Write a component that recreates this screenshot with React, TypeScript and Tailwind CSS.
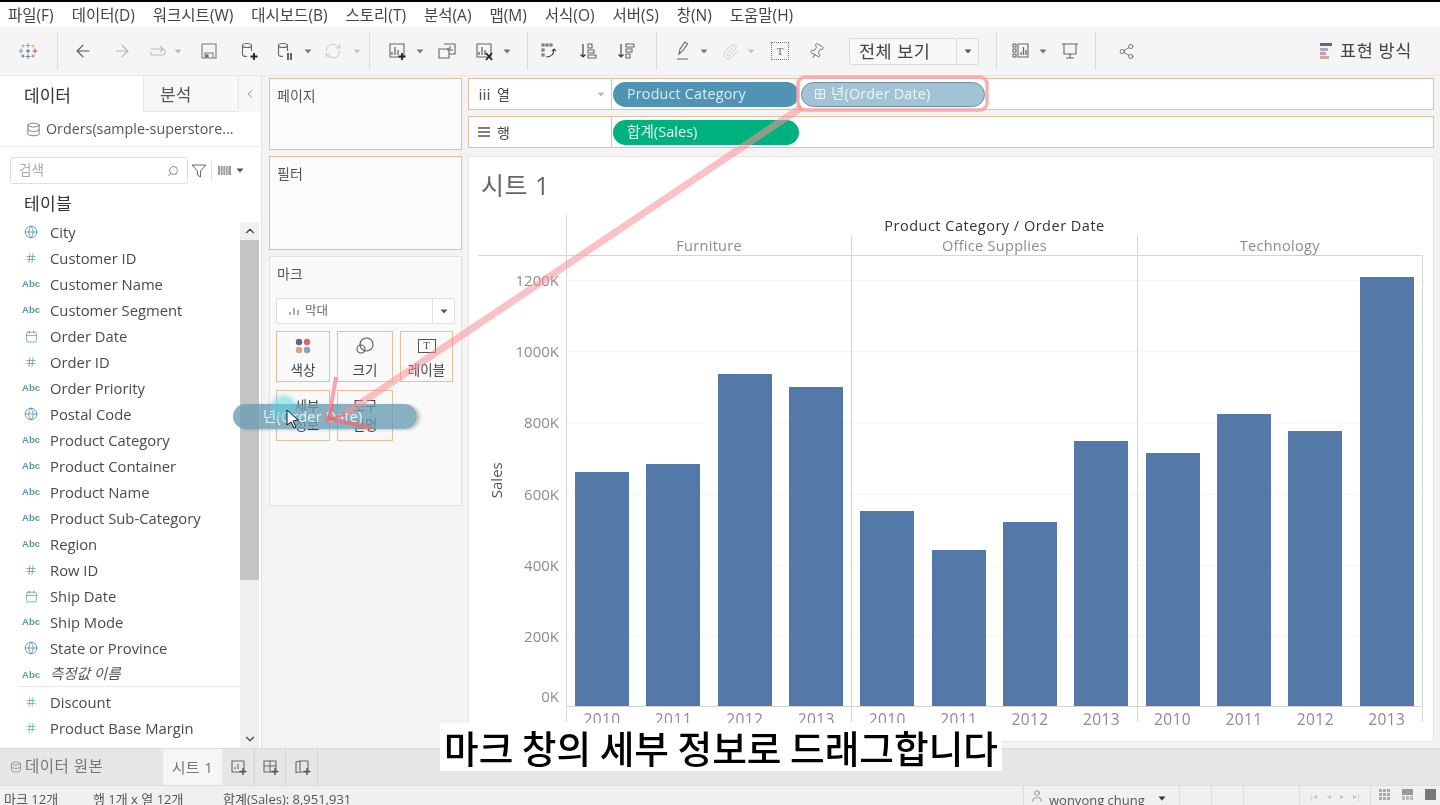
import React from "react";
import { ArrowLeft, ArrowRight, Globe, Hash, Calendar, ChevronUp, ChevronDown, ChevronLeft, Search, Pin, Paperclip, Share2, User, Database, RefreshCw } from "lucide-react";

const Caret = ({ className = "" }: { className?: string }) => (
  <svg width="8" height="5" viewBox="0 0 8 5" className={className}><path d="M0.5 0.5h7L4 4.5z" fill="currentColor" /></svg>
);

const Sep = ({ className = "" }: { className?: string }) => <div className={`w-px h-[38px] bg-[#dcdcdc] ${className}`} />;

const TableauLogo = () => (
  <svg width="20" height="20" viewBox="0 0 20 20" opacity="0.75">
    <g strokeWidth="1.1" fill="none">
      <path d="M10 2v5M7.500 4.500h5" stroke="#e8762c" />
      <path d="M10 13v5M7.500 15.500h5" stroke="#5b6591" />
      <path d="M3 7.500v5M0.500 10h5" stroke="#59879b" />
      <path d="M17 7.500v5M14.500 10h5" stroke="#c72035" />
      <path d="M5 3.500v3M3.500 5h3" stroke="#7099a6" />
      <path d="M15 3.500v3M13.500 5h3" stroke="#eb912b" />
      <path d="M5 13.500v3M3.500 15h3" stroke="#1f447d" />
      <path d="M15 13.500v3M13.500 15h3" stroke="#5c6692" />
      <path d="M10 8v4M8 10h4" stroke="#1f447d" />
    </g>
  </svg>
);

const SvgI = ({ children, w = 22 }: { children: React.ReactNode; w?: number }) => (
  <svg width={w} height="20" viewBox={`0 0 ${w} 20`} fill="none" stroke="#666" strokeWidth="1.1">{children}</svg>
);

const Bars = () => <path d="M5 14v-3M8 14V6M11 14V9" strokeWidth="1.3" />;
const Plus = () => <path d="M15 12v7M11.500 15.500h7" stroke="#222" strokeWidth="1.8" />;

const Toolbar = () => (
  <div className="h-[48px] bg-[#f5f5f5] flex items-center text-[#666] shrink-0">
    <div className="ml-[18px]"><TableauLogo /></div>
    <Sep className="ml-[19px]" />
    <ArrowLeft size={20} strokeWidth={1.4} className="ml-[15px] text-[#555]" />
    <ArrowRight size={20} strokeWidth={1.4} className="ml-[19px] text-[#b5b5b5]" />
    <div className="ml-[16px]"><SvgI><path d="M3 8h11a3 3 0 0 1 0 6H4a2 2 0 0 1-1-3M12 5l3 3-3 3" stroke="#bbb" /></SvgI></div>
    <Caret className="ml-[4px] text-[#bbb]" />
    <div className="ml-[17px]"><SvgI w={20}><path d="M3 3h14v14H3zM6 17v-5h8v5" stroke="#777" /><path d="M7 14h2v2H7z" fill="#777" /></SvgI></div>
    <div className="ml-[20px]"><SvgI><ellipse cx="8" cy="4.500" rx="4.500" ry="2" /><path d="M3.500 4.500v9a4.500 2 0 0 0 4.500 2M12.500 4.500V10" /><Plus /></SvgI></div>
    <div className="ml-[14px]"><SvgI><ellipse cx="8" cy="4.500" rx="4.500" ry="2" /><path d="M3.500 4.500v9a4.500 2 0 0 0 4.500 2M12.500 4.500V10" /><path d="M13 12v7M16 12v7" stroke="#333" strokeWidth="1.5" /></SvgI></div>
    <Caret className="ml-[7px] text-[#777]" />
    <RefreshCw size={18} strokeWidth={1.2} className="ml-[12px] text-[#c4c4c4]" />
    <Caret className="ml-[11px] text-[#c4c4c4]" />
    <Sep className="ml-[8px]" />
    <div className="ml-[17px]"><SvgI><path d="M3 3h14v13H3z" /><Bars /><Plus /></SvgI></div>
    <Caret className="ml-[7px] text-[#777]" />
    <div className="ml-[13px]"><SvgI><path d="M2 8h10v9H2zM7 3h11v10h-6" /><path d="M11 10V7M13 10V5M15 10V8" /></SvgI></div>
    <div className="ml-[15px]"><SvgI><path d="M3 3h14v13H3z" /><Bars /><path d="M12 12l6 7M18 12l-6 7" stroke="#222" strokeWidth="1.8" /></SvgI></div>
    <Caret className="ml-[7px] text-[#777]" />
    <Sep className="ml-[16px]" />
    <div className="ml-[10px]"><SvgI><path d="M4 3h2v2H4zM8 3h2v2H8zM12 3h2v2h-2zM4 8h2v2H4zM4 13h2v2H4z" /><path d="M8 16c5 0 8-3 8-8M14 10l2-2 2 2" stroke="#444" /></SvgI></div>
    <div className="ml-[17px]"><SvgI><path d="M6 3v13M3.500 13.500L6 16l2.500-2.500" stroke="#333" /><path d="M11 3h4v4h-4zM11 9h6v3h-6zM11 14h8v3h-8z" /></SvgI></div>
    <div className="ml-[16px]"><SvgI><path d="M6 3v13M3.500 13.500L6 16l2.500-2.500" stroke="#333" /><path d="M11 3h8v3h-8zM11 8h6v3h-6zM11 13h4v4h-4z" /></SvgI></div>
    <Sep className="ml-[19px]" />
    <div className="ml-[17px]"><SvgI w={17}><path d="M5 13l1-5 5-7 2.500 2-5 7zM3 18h11" stroke="#666" /></SvgI></div>
    <Caret className="ml-[9px] text-[#777]" />
    <Paperclip size={17} strokeWidth={1.2} className="ml-[14px] text-[#c8c8c8]" />
    <Caret className="ml-[8px] text-[#c4c4c4]" />
    <div className="ml-[16px] w-[18px] h-[18px] border border-dotted border-[#777] flex items-center justify-center text-[11px] leading-none [font-family:'Liberation_Serif',serif]">T</div>
    <Pin size={17} strokeWidth={1.2} className="ml-[19px] rotate-[30deg] text-[#666]" />
    <div className="ml-[24px] w-[130px] h-[27px] border border-[#dcdcdc] bg-[#f7f7f7] rounded-[2px] flex items-center">
      <span className="flex-1 pl-[9px] pt-[2px] text-[17.500px] tracking-[0.5px] text-[#444] leading-none">전체 보기</span>
      <span className="w-[22px] h-full border-l border-[#dcdcdc] flex items-center justify-center"><Caret className="text-[#555]" /></span>
    </div>
    <Sep className="ml-[17px]" />
    <div className="ml-[13px]"><SvgI><path d="M3 3h3v3H3zM3 8h3v3H3zM3 13h3v3H3zM8 3h10v13H8z" /><path d="M11 14v-3M13.500 14V6M16 14V9" strokeWidth="1.3" /></SvgI></div>
    <Caret className="ml-[7px] text-[#777]" />
    <div className="ml-[13px]"><SvgI w={20}><path d="M2 3h16M4 3v10h12V3M10 13v4M6 17h8" /></SvgI></div>
    <Sep className="ml-[15px]" />
    <Share2 size={17} strokeWidth={1.2} className="ml-[22px] text-[#666]" />
    <div className="ml-auto mr-[28px] flex items-center gap-[7px]">
      <svg width="13" height="18" viewBox="0 0 13 18">
        <rect x="0" y="1" width="12" height="3" fill="#5b6591" />
        <rect x="0" y="6" width="8" height="3" fill="#a5adc8" />
        <rect x="0" y="10" width="6" height="3" fill="#e8909a" />
        <rect x="0" y="14" width="9" height="3" fill="#c9a9a9" />
      </svg>
      <span className="text-[17.500px] tracking-[0.6px] text-[#444] leading-none">표현 방식</span>
    </div>
  </div>
);

const Abc = () => <span className="text-[9.500px] font-semibold text-[#5b9a9f] leading-none [font-family:'Liberation_Sans',sans-serif]">Abc</span>;

type Kind = "g" | "h" | "a" | "d";
const fields: [Kind, string][] = [
  ["g", "City"], ["h", "Customer ID"], ["a", "Customer Name"], ["a", "Customer Segment"], ["d", "Order Date"], ["h", "Order ID"],
  ["a", "Order Priority"], ["g", "Postal Code"], ["a", "Product Category"], ["a", "Product Container"], ["a", "Product Name"],
  ["a", "Product Sub-Category"], ["a", "Region"], ["h", "Row ID"], ["d", "Ship Date"], ["a", "Ship Mode"], ["g", "State or Province"],
];

const FieldIcon = ({ k, green }: { k: Kind; green?: boolean }) => (
  <span className="w-[30px] ml-[16px] flex justify-center items-center shrink-0">
    {k === "g" && <Globe size={14} strokeWidth={1.4} className="text-[#4f93a8]" />}
    {k === "h" && <Hash size={12} strokeWidth={1.5} className={green ? "text-[#52b69a]" : "text-[#5b9a9f]"} />}
    {k === "a" && <Abc />}
    {k === "d" && <Calendar size={13} strokeWidth={1.3} className="text-[#4f93a8]" />}
  </span>
);

const Field = ({ k, name, green }: { k: Kind; name: string; green?: boolean }) => (
  <div className="h-[26px] flex items-center">
    <FieldIcon k={k} green={green} />
    <span className="ml-[4px] text-[14.800px] text-[#4a4a4a] whitespace-nowrap leading-none">{name}</span>
  </div>
);

const DataPanel = () => (
  <div className="w-[262px] bg-white flex flex-col shrink-0 border-r border-[#e2e2e2]">
    <div className="h-[36px] flex shrink-0 bg-[#f7f7f7]">
      <div className="w-[143px] bg-white pl-[24px] pt-[3px] flex items-center text-[17px] text-[#333]">데이터</div>
      <div className="flex-1 flex items-center border border-t-0 border-[#e6e6e6] pl-[16px] pt-[3px] text-[17px] text-[#555]">분석</div>
      <div className="w-[22px] flex items-center justify-center"><ChevronLeft size={14} strokeWidth={1.3} className="text-[#666]" /></div>
    </div>
    <div className="h-[35px] flex items-center pl-[26px] gap-[5px] border-b border-[#ececec] shrink-0">
      <Database size={15} strokeWidth={1.3} className="text-[#666]" />
      <span className="text-[14.300px] text-[#555] whitespace-nowrap">Orders(sample-superstore...</span>
    </div>
    <div className="h-[27px] mt-[10px] flex items-center shrink-0 pl-[10px]">
      <div className="w-[178px] h-[27px] border border-[#dedede] rounded-[3px] flex items-center justify-between px-[8px]">
        <span className="text-[13.500px] text-[#aaa]">검색</span>
        <Search size={12} strokeWidth={1.5} className="text-[#666] -scale-x-100" />
      </div>
      <svg width="16" height="14" viewBox="0 0 16 14" className="ml-[3px]" fill="none" stroke="#666"><path d="M1 1h14L9.500 7v6L6.500 11V7z" /></svg>
      <div className="w-px h-[20px] bg-[#e0e0e0] ml-[4px]" />
      <svg width="13" height="9" viewBox="0 0 13 9" className="ml-[6px]"><path d="M0 0h13v9H0z" fill="#999" /><path d="M2.500 0v9M5 0v9M7.500 0v9M10 0v9" stroke="#fff" strokeWidth="0.8" /></svg>
      <Caret className="ml-[5px] text-[#555]" />
    </div>
    <div className="flex-1 flex mt-[11px] min-h-0">
      <div className="flex-1 min-w-0">
        <div className="h-[18px] mb-[6px] pl-[24px] flex items-center text-[17px] text-[#333] tracking-[0.3px]">테이블</div>
        {fields.map(([k, n]) => <Field key={n} k={k} name={n} />)}
        <div className="h-[26px] pt-[2px] flex items-center border-b border-[#e8e8e8] ml-[18px] mb-[2px]">
          <span className="w-[30px] -ml-[2px] flex justify-center"><Abc /></span>
          <span className="ml-[4px] text-[14.500px] italic text-[#555] leading-none">측정값 이름</span>
        </div>
        <Field k="h" name="Discount" green />
        <Field k="h" name="Product Base Margin" green />
      </div>
      <div className="w-[19px] mr-[2px] mt-[27px] bg-[#f0f0f0] flex flex-col shrink-0">
        <div className="h-[18px] flex items-center justify-center shrink-0"><ChevronUp size={14} className="text-[#444]" /></div>
        <div className="h-[340px] bg-[#c4c4c4] shrink-0" />
        <div className="flex-1" />
        <div className="h-[18px] flex items-center justify-center shrink-0"><ChevronDown size={14} className="text-[#444]" /></div>
      </div>
    </div>
  </div>
);

const MarkBtn = ({ label, icon, className = "" }: { label: string; icon?: React.ReactNode; className?: string }) => (
  <div className={`h-[51px] border border-[#e6bf9e] flex flex-col items-center justify-end pb-[2px] ${className}`}>
    {icon}
    {label && <span className="text-[13.500px] text-[#444] leading-[18px]">{label}</span>}
  </div>
);

const MiddleCol = () => (
  <div className="w-[193px] ml-[7px] pt-[2px] shrink-0 flex flex-col">
    <div className="h-[72px] border border-[#e6bf9e] bg-[#fbfbfb] pl-[7px] pt-[6px] text-[14px] text-[#555]">페이지</div>
    <div className="h-[94px] mt-[6px] border border-[#e6bf9e] bg-[#fbfbfb] pl-[7px] pt-[6px] text-[14px] text-[#555]">필터</div>
    <div className="h-[250px] mt-[6px] border border-[#e2e2e2] bg-[#f9f9f9] px-[6px]">
      <div className="pl-[1px] pt-[6px] h-[41px] text-[14px] text-[#555]">마크</div>
      <div className="h-[26px] border border-[#dedede] bg-white rounded-[2px] flex items-center">
        <span className="flex-1 flex items-center pl-[12px] gap-[6px] text-[12.500px] text-[#666]">
          <svg width="10" height="8" viewBox="0 0 10 8"><path d="M1 8V5M5 8V1M9 8V3" stroke="#999" strokeWidth="1.6" /></svg>막대
        </span>
        <span className="w-[22px] h-full border-l border-[#e2e2e2] flex items-center justify-center"><Caret className="text-[#555]" /></span>
      </div>
      <div className="mt-[7px] grid grid-cols-[54px_56px_53px] gap-x-[7px] gap-y-[8px] -mr-[1px]">
        <MarkBtn label="색상" icon={
          <svg width="16" height="16" viewBox="0 0 16 16" className="mb-[7px]"><circle cx="4" cy="4" r="3.200" fill="#5b6591" /><circle cx="12" cy="4" r="3.200" fill="#d9647a" /><circle cx="4" cy="12" r="3.200" fill="#e0a577" /><circle cx="12" cy="12" r="3.200" fill="#7ea6c4" /></svg>
        } />
        <MarkBtn label="크기" icon={
          <svg width="20" height="18" viewBox="0 0 20 18" fill="none" stroke="#555" strokeWidth="1.1" className="mb-[6px]"><circle cx="11.500" cy="7.500" r="6.500" /><circle cx="6" cy="12" r="4" /></svg>
        } />
        <MarkBtn label="레이블" icon={
          <div className="w-[18px] h-[14px] border border-[#555] flex items-center justify-center text-[10px] leading-none mb-[8px] [font-family:'Liberation_Serif',serif] text-[#444]">T</div>
        } />
        <MarkBtn label="" className="!justify-center !pb-0 text-center" icon={<span className="text-[13.500px] leading-[19px] text-[#444] text-center pl-[8px]">세부<br />정보</span>} />
        <MarkBtn label="" className="!justify-center !pb-0 text-center" icon={<span className="text-[13.500px] leading-[19px] text-[#444] text-center">도구<br />설명</span>} />
      </div>
    </div>
  </div>
);

const Shelf = ({ icon, label, caret, children, className = "" }: { icon: React.ReactNode; label: string; caret?: boolean; children: React.ReactNode; className?: string }) => (
  <div className={`h-[32px] border border-[#e6bf9e] bg-white flex ${className}`}>
    <div className="w-[143px] border-r border-[#e6bf9e] flex items-center pl-[8px] gap-[6px] text-[14px] text-[#444] shrink-0">
      <span className="w-[14px] flex justify-center">{icon}</span>{label}
      {caret && <Caret className="ml-auto mr-[6px] text-[#bbb]" />}
    </div>
    <div className="flex items-center pl-[1px] gap-[2px]">{children}</div>
  </div>
);

const pane = [
  { name: "Furniture", tops: [472, 464, 374, 387] },
  { name: "Office Supplies", tops: [511, 550, 522, 441] },
  { name: "Technology", tops: [453, 414, 431, 277] },
];
const ticks: [string, string][] = [["1200K", "mb-[51.200px]"], ["1000K", "mb-[51.200px]"], ["800K", "mb-[51.200px]"], ["600K", "mb-[51.200px]"], ["400K", "mb-[51.200px]"], ["200K", "mb-[40px]"], ["0K", ""]];
const years = ["2010", "2011", "2012", "2013"];

const Chart = () => (
  <div className="ml-[9px] w-[945px] flex flex-col">
    <div className="h-[21px] ml-[88px] border-l border-[#d4d4d4] flex items-end justify-center pr-[1px] text-[14.500px] font-medium text-[#333] leading-[20px] tracking-[0.5px]">Product Category / Order Date</div>
    <div className="h-[20px] pl-[88px] border-b border-[#d4d4d4] flex">
      {pane.map((p) => (
        <div key={p.name} className="w-[285.300px] border-l border-[#d4d4d4] flex items-center justify-center text-[14.500px] text-[#8c8c8c] tracking-[0.3px]">{p.name}</div>
      ))}
    </div>
    <div className="h-[451px] flex">
      <div className="w-[88px] flex shrink-0">
        <div className="w-[38px] flex items-center justify-center">
          <span className="-rotate-90 text-[15px] text-[#555] translate-y-[-1px] translate-x-[-1px]">Sales</span>
        </div>
        <div className="flex-1 pt-[14px] pr-[7px] text-right">
          {ticks.map(([t, m]) => <div key={t} className={`h-[20px] leading-[20px] text-[15px] text-[#8c8c8c] ${m}`}>{t}</div>)}
        </div>
      </div>
      {pane.map((p) => (
        <div key={p.name} className="w-[285.300px] border-l border-b border-[#d4d4d4] pl-[8px] flex items-end gap-[17.400px] bg-[linear-gradient(#f5f5f5_1px,transparent_1px)] bg-[length:100%_71.200px] bg-[position:0_24px]">
          {p.tops.map((t, i) => <div key={i} className="w-[54px] bg-[#5479a8]" style={{ height: 706 - t }} />)}
        </div>
      ))}
      <div className="w-px bg-[#d4d4d4]" />
    </div>
    <div className="h-[15px] pl-[88px] flex">
      {pane.map((p) => (
        <div key={p.name} className="w-[285.300px] border-l border-[#d4d4d4] pl-[8px] flex gap-[17.400px]">
          {years.map((y) => <div key={y} className="w-[54px] text-center text-[15.500px] text-[#8c8c8c] leading-[24px] tracking-[0.4px]">{y}</div>)}
        </div>
      ))}
      <div className="w-px bg-[#d4d4d4]" />
    </div>
  </div>
);

const RightCol = () => (
  <div className="w-[966px] ml-[6px] pt-[2px] shrink-0 flex flex-col">
    <Shelf icon={<svg width="11" height="11" viewBox="0 0 11 11"><path d="M1.500 3v8M5.500 3v8M9.500 3v8M1.500 0v1.500M5.500 0v1.500M9.500 0v1.500" stroke="#555" strokeWidth="1.400" /></svg>} label="열" caret>
      <div className="w-[186px] h-[25px] rounded-full bg-[#4f94b4] text-[#dcedf3] text-[14.300px] pl-[14px] flex items-center tracking-[0.2px]">Product Category</div>
      <div className="w-[184px] h-[25px] rounded-full bg-[#a0c4d4] border border-[#6d8fa8] text-[#eef6f9] text-[14.400px] pl-[13px] flex items-center gap-[6px] tracking-[0.2px]">
        <svg width="10" height="10" viewBox="0 0 10 10" fill="none" stroke="#eef6f9"><path d="M.5.5h9v9h-9zM5 .5v9M.5 5h9" /></svg>년(Order Date)
      </div>
    </Shelf>
    <Shelf className="mt-[6px]" icon={<svg width="12" height="10" viewBox="0 0 12 10"><path d="M0 1h12M0 5h12M0 9h12" stroke="#555" strokeWidth="1.400" /></svg>} label="행">
      <div className="w-[186px] h-[25px] rounded-full bg-[#00b180] text-[#e0f5ee] text-[14.600px] pl-[14px] flex items-center">합계(Sales)</div>
    </Shelf>
    <div className="h-[586px] mt-[8px] bg-white border border-[#e6e6e6]">
      <div className="h-[58px] pl-[12px] pt-[8px] text-[25px] text-[#666] leading-[40px] tracking-[0.5px]">시트 1</div>
      <Chart />
    </div>
  </div>
);

const TabBar = () => (
  <div className="h-[37px] bg-[#e6e6e6] flex items-stretch shrink-0 border-t border-[#dcdcdc]">
    <div className="w-[163px] pl-[10px] flex items-center gap-[3px] text-[15.500px] text-[#777] tracking-[0.5px]">
      <Database size={12} strokeWidth={1.3} />데이터 원본
    </div>
    <div className="w-[59px] bg-[#f6f6f6] flex items-center justify-center text-[15px] text-[#777] tracking-[0.4px]">시트 1</div>
    <div className="w-[33px] border-r border-[#d4d4d4] flex items-center justify-center pl-[2px]"><SvgI><path d="M4 4h12v11H4z" /><path d="M7 12v-2M10 12V7" /><path d="M15 11v7M11.500 14.500h7" stroke="#555" strokeWidth="1.400" /></SvgI></div>
    <div className="w-[31px] border-r border-[#d4d4d4] flex items-center justify-center pl-[2px]"><SvgI><path d="M4 4h12v11H4zM4 9h12M10 4v11" /><path d="M15 11v7M11.500 14.500h7" stroke="#555" strokeWidth="1.400" /></SvgI></div>
    <div className="w-[32px] border-r border-[#d4d4d4] flex items-center justify-center pl-[2px]"><SvgI><path d="M4 5l4-1v11l-4 .500zM8 4h8v11H8" /><path d="M15 11v7M11.500 14.500h7" stroke="#555" strokeWidth="1.400" /></SvgI></div>
  </div>
);

const StatusBar = () => (
  <div className="h-[20px] bg-[#f0f0f0] flex items-start text-[13px] text-[#555] shrink-0 border-t border-[#dcdcdc] overflow-hidden">
    <span className="ml-[4px] mt-[5px] leading-[16px] w-[89px]">마크 12개</span>
    <span className="mt-[5px] leading-[16px] w-[130px]">행 1개 x 열 12개</span>
    <span className="mt-[5px] leading-[16px]">합계(Sales): 8,951,931</span>
    <div className="ml-auto flex h-full">
      <div className="w-[157px] border-x border-[#dcdcdc] flex items-start pl-[6px] pt-[3px] gap-[5px]">
        <User size={14} strokeWidth={1.1} className="text-[#666]" />
        <span className="leading-[16px] mt-[3px]">wonyong chung</span>
        <Caret className="ml-[8px] mt-[7px] text-[#333]" />
      </div>
      <div className="w-[32px] border-r border-[#dcdcdc]" />
      <div className="w-[32px] border-r border-[#dcdcdc]" />
      <div className="w-[56px] border-r border-[#dcdcdc]" />
      <div className="w-[71px] border-r border-[#dcdcdc] flex items-start justify-center pt-[6px] gap-[9px] text-[8px] leading-none text-[#c4c4c4]">
        <span>|◂</span><span>◂</span><span>▸</span><span>▸|</span>
      </div>
      <div className="w-[69px] flex items-start gap-[12px] pt-[3px] pl-[8px]">
        <svg width="11" height="11" viewBox="0 0 11 11"><path d="M0 0h3v3H0zM4 0h3v3H4zM8 0h3v3H8zM0 4h3v3H0zM4 4h3v3H4zM8 4h3v3H8zM0 8h3v3H0zM4 8h3v3H4zM8 8h3v3H8z" fill="#aaa" /></svg>
        <svg width="11" height="11" viewBox="0 0 11 11"><path d="M0 0h11v6H0z" fill="#999" /><path d="M0 7h3v4H0zM4 7h3v4H4zM8 7h3v4H8z" fill="#bbb" /></svg>
        <div className="w-[11px] h-[11px] bg-[#777]" />
      </div>
    </div>
  </div>
);

export default function App() {
  return (
    <div className="relative w-[1440px] h-[805px] overflow-hidden bg-[#f3f3f3] flex flex-col [font-family:'Open_Sans','Noto_Sans_CJK_KR',sans-serif] blur-[0.3px]">
      <div className="h-[2px] bg-black shrink-0" />
      <div className="h-[25px] bg-white flex items-center pl-[8px] gap-[18px] pt-[2px] text-[15.500px] text-[#444] whitespace-nowrap shrink-0">
        {["파일(F)", "데이터(D)", "워크시트(W)", "대시보드(B)", "스토리(T)", "분석(A)", "맵(M)", "서식(O)", "서버(S)", "창(N)", "도움말(H)"].map((m) => <span key={m}>{m}</span>)}
      </div>
      <Toolbar />
      <div className="flex-1 flex min-h-0 border-t border-[#e8e8e8]">
        <DataPanel />
        <MiddleCol />
        <RightCol />
      </div>
      <TabBar />
      <StatusBar />

      {/* drag pill */}
      <div className="absolute left-[233px] top-[404px] w-[184px] h-[25px] rounded-full bg-[#6a9fb5]/80 shadow-[3px_1px_3px_rgba(0,0,0,0.2)] flex items-center pl-[30px] text-[14.400px] text-[#e8f3f7] tracking-[0.2px]">년(Order Date)</div>
      <div className="absolute left-[271px] top-[395px] w-[25px] h-[25px] rounded-full bg-[#53d3e6]/50 blur-[2px]" />

      {/* highlight annotation */}
      <svg className="absolute left-0 top-0 pointer-events-none" width="1440" height="805" fill="none">
        <rect x="798" y="77" width="189" height="33" rx="7" stroke="#f9a5a8" strokeWidth="3.500" opacity="0.9" />
        <path d="M802 107L346 413" stroke="#f98e94" strokeOpacity="0.55" strokeWidth="7" />
        <path d="M336 377L329 418" stroke="#f98e94" strokeOpacity="0.8" strokeWidth="4" />
        <path d="M326 418L372 428" stroke="#f06a70" strokeOpacity="0.8" strokeWidth="4" />
        <path d="M333 404L328 421L345 414" stroke="#f06a70" strokeOpacity="0.7" strokeWidth="3" />
        <path d="M287 410v15l4-3 3 6 2-1-3-6 5-1z" fill="#fff" stroke="#111" strokeWidth="1" />
      </svg>

      {/* caption */}
      <div className="absolute left-[440px] top-[723px] w-[562px] h-[48px] bg-white flex items-center justify-center text-[37.700px] text-black whitespace-nowrap leading-none font-medium [font-family:'Noto_Sans_CJK_KR',sans-serif]">마크 창의 세부 정보로 드래그합니다</div>
    </div>
  );
}
